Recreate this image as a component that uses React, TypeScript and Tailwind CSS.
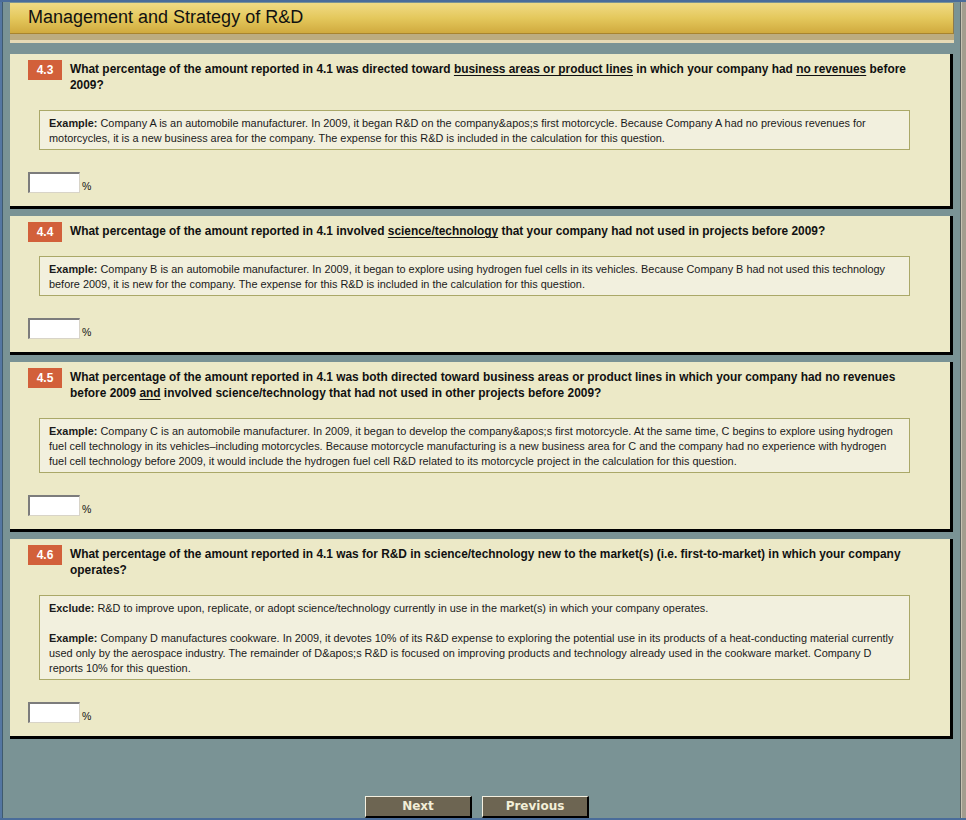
import React from "react";

const U = ({ children }: { children: React.ReactNode }) => (
  <span className="underline underline-offset-2">{children}</span>
);

function Card({
  num,
  question,
  children,
}: {
  num: string;
  question: React.ReactNode;
  children: React.ReactNode;
}) {
  return (
    <div className="mr-[1px] bg-[#ece9c7] border-r-[3px] border-b-[3px] border-black pt-[6px] pl-[18px] pr-[18px] pb-[13px]">
      <div className="flex items-start">
        <div className="h-[17px] shrink-0">
          <div className="w-[34px] h-[20px] bg-[#d2603a] text-white font-bold text-[12px] leading-[20px] text-center">
            {num}
          </div>
        </div>
        <div className="ml-[8px] mt-[1px] pr-[4px] font-bold text-[11.9px] leading-[16px] text-[#111]">
          {question}
        </div>
      </div>
      <div className="mt-[17px] ml-[11px] mr-[22px] border border-[#aaa868] bg-[#f2f0de] pl-[9px] pr-[5px] pt-[5px] pb-[3px] text-[10.9px] leading-[15px] text-[#1a1a1a]">
        {children}
      </div>
      <div className="mt-[22px] flex items-end">
        <div className="w-[52px] h-[21px] bg-white border-t-2 border-l-2 border-t-[#7c7c7c] border-l-[#7c7c7c] border-b border-r border-b-[#d8d4c8] border-r-[#d8d4c8]" />
        <span className="ml-[2px] text-[10.5px] leading-[12px] text-[#111] mb-[1px]">%</span>
      </div>
    </div>
  );
}

const btn =
  "w-[107px] h-[22px] bg-[#6d6552] border-t border-l border-t-[#f4f0e0] border-l-[#f4f0e0] border-r-2 border-b-2 border-r-black border-b-black text-[#f2eed8] font-bold text-[12px] leading-[18px]";

export default function App() {
  return (
    <div
      className="w-[966px] h-[820px] overflow-hidden relative bg-[#7a9395] border-t-2 border-b-2 border-[#4a6c9a] flex"
      style={{ fontFamily: '"Liberation Sans", Arial, sans-serif' }}
    >
      <div className="w-[2px] bg-[#5476a2] shrink-0" />
      <div className="w-[1px] bg-[#3f5a6e] shrink-0" />
      <div className="w-[957px] shrink-0 pl-[7px] pr-[6px] pt-[1px] flex flex-col">
        <div className="h-[32px] bg-gradient-to-b from-[#f1db84] via-[#e4c85c] to-[#d0aa3e] border-b border-[#a8842e] pl-[18px] flex items-center text-[18px] text-[#111] border-r border-r-[#8a7a50]">
          <span className="-mt-[2px]">Management and Strategy of R&amp;D</span>
        </div>
        <div className="h-[6px] bg-[#bcac80]" />
        <div className="h-[3px] bg-[#e6dab6]" />
        <div className="h-[11px]" />
        <div className="flex flex-col gap-[7px]">
          <Card
            num="4.3"
            question={
              <>
                What percentage of the amount reported in 4.1 was directed toward{" "}
                <U>business areas or product lines</U> in which your company had{" "}
                <U>no revenues</U> before 2009?
              </>
            }
          >
            <b>Example:</b> Company A is an automobile manufacturer. In 2009, it began R&amp;D on the
            company&amp;apos;s first motorcycle. Because Company A had no previous revenues for
            motorcycles, it is a new business area for the company. The expense for this R&amp;D is
            included in the calculation for this question.
          </Card>
          <Card
            num="4.4"
            question={
              <>
                What percentage of the amount reported in 4.1 involved <U>science/technology</U> that
                your company had not used in projects before 2009?
              </>
            }
          >
            <b>Example:</b> Company B is an automobile manufacturer. In 2009, it began to explore using
            hydrogen fuel cells in its vehicles. Because Company B had not used this technology before
            2009, it is new for the company. The expense for this R&amp;D is included in the
            calculation for this question.
          </Card>
          <Card
            num="4.5"
            question={
              <>
                What percentage of the amount reported in 4.1 was both directed toward business areas or
                product lines in which your company had no revenues before 2009 <U>and</U> involved
                science/technology that had not used in other projects before 2009?
              </>
            }
          >
            <b>Example:</b> Company C is an automobile manufacturer. In 2009, it began to develop the
            company&amp;apos;s first motorcycle. At the same time, C begins to explore using hydrogen
            fuel cell technology in its vehicles–including motorcycles. Because motorcycle
            manufacturing is a new business area for C and the company had no experience with hydrogen
            fuel cell technology before 2009, it would include the hydrogen fuel cell R&amp;D related
            to its motorcycle project in the calculation for this question.
          </Card>
          <Card
            num="4.6"
            question={
              <>
                What percentage of the amount reported in 4.1 was for R&amp;D in science/technology new
                to the market(s) (i.e. first-to-market) in which your company operates?
              </>
            }
          >
            <p>
              <b>Exclude:</b> R&amp;D to improve upon, replicate, or adopt science/technology currently
              in use in the market(s) in which your company operates.
            </p>
            <p className="mt-[15px]">
              <b>Example:</b> Company D manufactures cookware. In 2009, it devotes 10% of its R&amp;D
              expense to exploring the potential use in its products of a heat-conducting material
              currently used only by the aerospace industry. The remainder of D&amp;apos;s R&amp;D is
              focused on improving products and technology already used in the cookware market.
              Company D reports 10% for this question.
            </p>
          </Card>
        </div>
        <div className="mt-[57px] flex gap-[10px] pl-[355px]">
          <button className={btn} style={{ fontFamily: '"DejaVu Sans", Verdana, sans-serif' }}>
            Next
          </button>
          <button className={btn} style={{ fontFamily: '"DejaVu Sans", Verdana, sans-serif' }}>
            Previous
          </button>
        </div>
      </div>
      <div className="w-[1px] bg-[#5c6460] shrink-0" />
      <div className="flex-1 bg-[#a39d8e] border-l border-[#c8c2b2]" />
    </div>
  );
}
